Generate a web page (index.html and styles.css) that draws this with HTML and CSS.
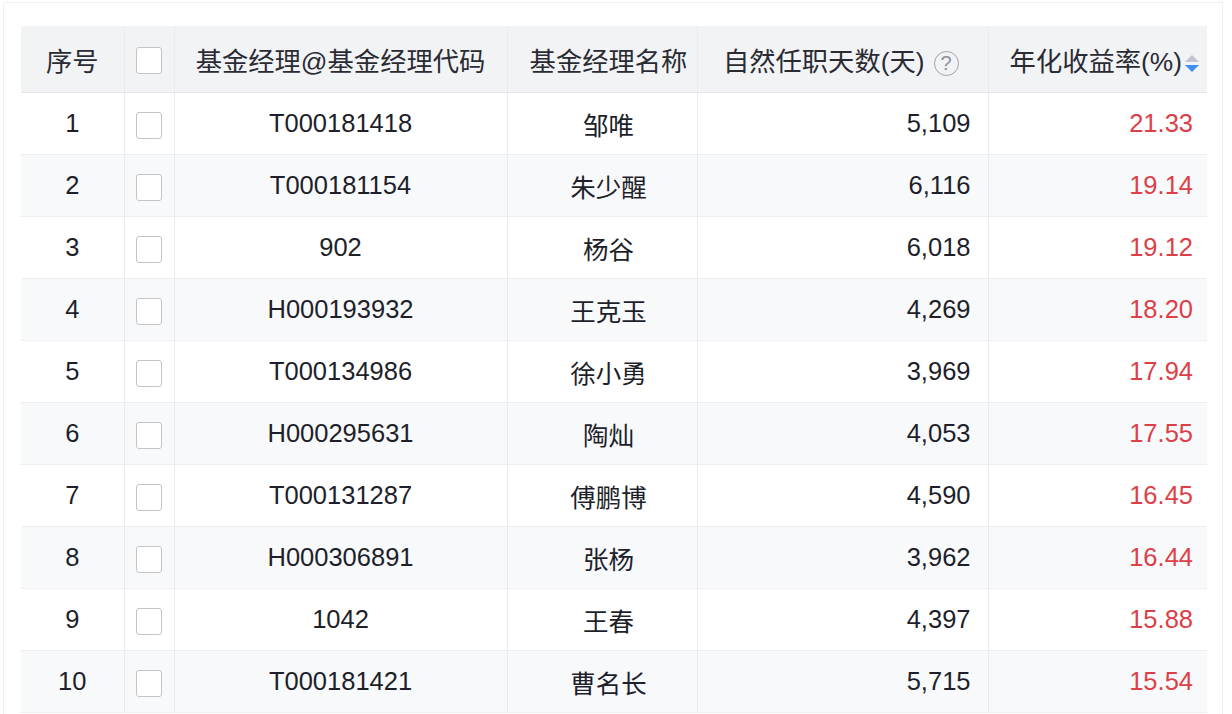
FILE: index.html
```html
<!DOCTYPE html>
<html lang="zh">
<head>
<meta charset="utf-8">
<link rel="stylesheet" href="styles.css">
</head>
<body>
<div class="frame">
  <table class="grid">
    <colgroup>
      <col class="c-idx"><col class="c-chk"><col class="c-code"><col class="c-name"><col class="c-days"><col class="c-ret">
    </colgroup>
    <thead>
      <tr>
        <th class="center">序号</th>
        <th class="center"><span class="box"></span></th>
        <th class="center">基金经理@基金经理代码</th>
        <th class="center name">基金经理名称</th>
        <th class="right days-h">自然任职天数(天)<span class="help">?</span></th>
        <th class="right ret-h">年化收益率(%)<span class="sort"><i class="up"></i><i class="down"></i></span></th>
      </tr>
    </thead>
    <tbody>
      <tr><td class="center">1</td><td class="center"><span class="box"></span></td><td class="center">T000181418</td><td class="center name">邹唯</td><td class="right">5,109</td><td class="right red">21.33</td></tr>
      <tr><td class="center">2</td><td class="center"><span class="box"></span></td><td class="center">T000181154</td><td class="center name">朱少醒</td><td class="right">6,116</td><td class="right red">19.14</td></tr>
      <tr><td class="center">3</td><td class="center"><span class="box"></span></td><td class="center">902</td><td class="center name">杨谷</td><td class="right">6,018</td><td class="right red">19.12</td></tr>
      <tr><td class="center">4</td><td class="center"><span class="box"></span></td><td class="center">H000193932</td><td class="center name">王克玉</td><td class="right">4,269</td><td class="right red">18.20</td></tr>
      <tr><td class="center">5</td><td class="center"><span class="box"></span></td><td class="center">T000134986</td><td class="center name">徐小勇</td><td class="right">3,969</td><td class="right red">17.94</td></tr>
      <tr><td class="center">6</td><td class="center"><span class="box"></span></td><td class="center">H000295631</td><td class="center name">陶灿</td><td class="right">4,053</td><td class="right red">17.55</td></tr>
      <tr><td class="center">7</td><td class="center"><span class="box"></span></td><td class="center">T000131287</td><td class="center name">傅鹏博</td><td class="right">4,590</td><td class="right red">16.45</td></tr>
      <tr><td class="center">8</td><td class="center"><span class="box"></span></td><td class="center">H000306891</td><td class="center name">张杨</td><td class="right">3,962</td><td class="right red">16.44</td></tr>
      <tr><td class="center">9</td><td class="center"><span class="box"></span></td><td class="center">1042</td><td class="center name">王春</td><td class="right">4,397</td><td class="right red">15.88</td></tr>
      <tr><td class="center">10</td><td class="center"><span class="box"></span></td><td class="center">T000181421</td><td class="center name">曹名长</td><td class="right">5,715</td><td class="right red">15.54</td></tr>
    </tbody>
  </table>
</div>
</body>
</html>
```

FILE: styles.css
```css
html, body {
  margin: 0;
  padding: 0;
  background: #ffffff;
}
body {
  font-family: "Liberation Sans", Arial, "Noto Sans CJK SC", sans-serif;
  color: #1e1f2a;
  overflow: hidden;
}
.frame {
  margin: 2px 9px 0 3px;
  border: 1px solid #eef0f3;
  border-bottom: none;
  padding: 23px 14px 0 17px;
  height: 720px;
}
.grid {
  border-collapse: collapse;
  table-layout: fixed;
  width: 1186px;
}
.c-idx { width: 103px; }
.c-chk { width: 50px; }
.c-code { width: 333px; }
.c-name { width: 190px; }
.c-days { width: 291px; }
.c-ret { width: 219px; }

th, td {
  border-left: 1px solid #e9ebef;
  padding: 0;
  font-size: 25.5px;
  white-space: nowrap;
}
th:first-child, td:first-child { border-left: none; }
th {
  height: 66px;
  background: #f2f3f5;
  font-weight: normal;
  font-size: 26.3px;
  color: #2a2b33;
  border-bottom: 1px solid #e3e5e9;
}
td {
  height: 61px;
  border-bottom: 1px solid #eceef2;
}
tbody tr:nth-child(even) td { background: #f8f9fb; }
.center { text-align: center; }
.name { padding-left: 13px; }
.right { text-align: right; padding-right: 17px; }
.red { color: #dc3f48; padding-right: 14px; }
.days-h { padding-right: 29px; }
.ret-h { padding-right: 8px; }

.box {
  display: inline-block;
  border: 1.5px solid #c2c4c8;
  border-radius: 3px;
  background: #ffffff;
  vertical-align: middle;
  box-sizing: border-box;
  width: 26px;
  height: 27px;
}
td .box { vertical-align: -8px; }
.help {
  display: inline-block;
  width: 25px;
  height: 25px;
  border: 1.5px solid #a2a4aa;
  border-radius: 50%;
  box-sizing: border-box;
  color: #8e9097;
  font-size: 20px;
  line-height: 22px;
  text-align: center;
  margin-left: 9px;
  vertical-align: middle;
}
.sort {
  display: inline-flex;
  flex-direction: column;
  gap: 3px;
  margin-left: 3px;
  vertical-align: middle;
}
.sort i {
  display: block;
  width: 0;
  height: 0;
  border-left: 7px solid transparent;
  border-right: 7px solid transparent;
}
.sort .up { border-bottom: 7px solid #c0c4cc; }
.sort .down { border-top: 7px solid #3f8ef0; }
```
